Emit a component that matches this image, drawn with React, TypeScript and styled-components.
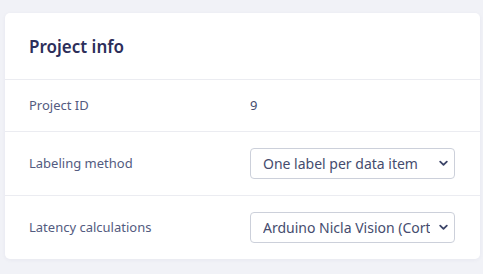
import styled, { createGlobalStyle } from "styled-components";

const GlobalStyle = createGlobalStyle`
  html, body {
    margin: 0;
    padding: 0;
    background: #f1f2f7;
    font-family: "Noto Sans", "Open Sans", sans-serif;
  }
`;

const Page = styled.div`
  padding: 13px 3px 16px 5px;
`;

const Card = styled.section`
  background: #ffffff;
  border-radius: 5px;
  box-shadow: 0 1px 4px rgba(40, 45, 90, 0.05);
  width: 475px;
`;

const Header = styled.div`
  padding: 21px 24px 20px;
  border-bottom: 1px solid #ebecf1;
`;

const Title = styled.h2`
  margin: 0;
  font-size: 17px;
  font-weight: 600;
  line-height: 25px;
  color: #2c2e5a;
`;

const Row = styled.div<{ $last?: boolean }>`
  display: grid;
  grid-template-columns: 1fr 205px;
  align-items: center;
  padding: 16px 25px 16px 24px;
  min-height: 19px;
  border-bottom: ${({ $last }) => ($last ? "none" : "1px solid #ebecf1")};
`;

const Label = styled.div`
  font-size: 13px;
  line-height: 19px;
  color: #535b80;
`;

const Value = styled.div`
  font-size: 13px;
  line-height: 19px;
  color: #454c6e;
`;

const SelectWrap = styled.div`
  position: relative;
`;

const Select = styled.select`
  appearance: none;
  width: 100%;
  height: 31px;
  padding: 0 24px 0 12px;
  border: 1px solid #ccd0da;
  border-radius: 4px;
  background: #ffffff;
  font-family: "Noto Sans", "Open Sans", sans-serif;
  font-size: 14px;
  color: #454c6e;
  outline: none;
`;

const Chevron = styled.svg`
  position: absolute;
  right: 7px;
  top: 12px;
  width: 9px;
  height: 7px;
  pointer-events: none;
`;

const rows = [
  { label: "Labeling method", options: ["One label per data item", "Bounding boxes (object detection)"] },
  { label: "Latency calculations", options: ["Arduino Nicla Vision (Cortex-M7 480MHz)", "Raspberry Pi 4"] },
];

const App = () => (
  <>
    <GlobalStyle />
    <Page>
      <Card>
        <Header>
          <Title>Project info</Title>
        </Header>
        <Row>
          <Label>Project ID</Label>
          <Value>9</Value>
        </Row>
        {rows.map(({ label, options }, i) => (
          <Row key={label} $last={i === rows.length - 1}>
            <Label>{label}</Label>
            <SelectWrap>
              <Select defaultValue={options[0]}>
                {options.map((o) => (
                  <option key={o}>{o}</option>
                ))}
              </Select>
              <Chevron viewBox="0 0 9 7">
                <path d="M1.2 1.6 L4.5 4.8 L7.8 1.6" fill="none" stroke="#3c4468" strokeWidth="1.8" strokeLinecap="round" strokeLinejoin="round" />
              </Chevron>
            </SelectWrap>
          </Row>
        ))}
      </Card>
    </Page>
  </>
);

export default App;
